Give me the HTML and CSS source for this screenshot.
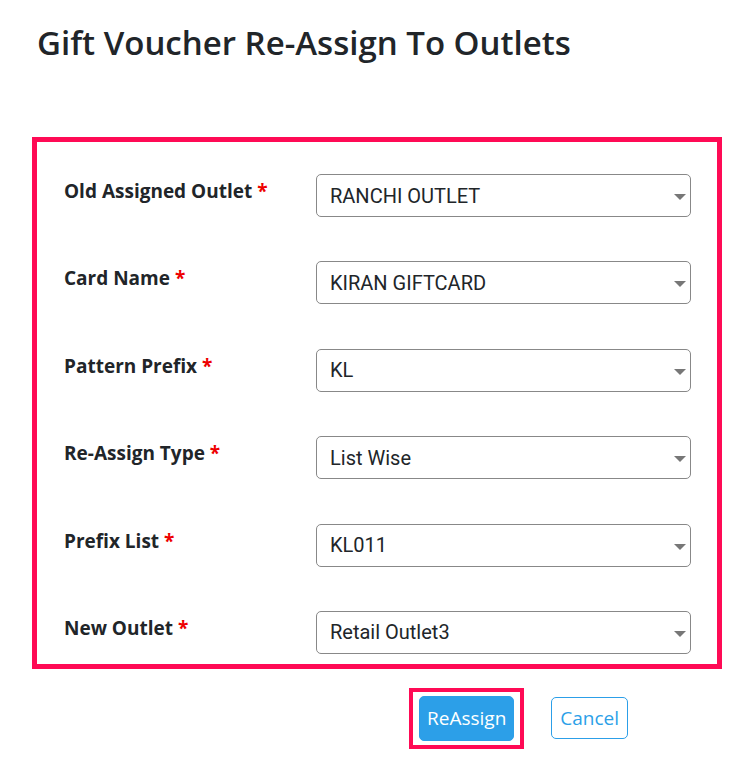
FILE: index.html
```html
<!DOCTYPE html>
<html>
<head>
  <title>Gift Voucher Re-Assign To Outlets</title>
  <link rel="stylesheet" href="styles.css">
</head>
<body>
  <div class="page">
    <h2 class="title">Gift Voucher Re-Assign To Outlets</h2>

    <div class="form-box">
      <div class="row">
        <label>Old Assigned Outlet <span class="req">*</span></label>
        <div class="select-wrap">
          <select><option>RANCHI OUTLET</option></select>
        </div>
      </div>
      <div class="row">
        <label>Card Name <span class="req">*</span></label>
        <div class="select-wrap">
          <select><option>KIRAN GIFTCARD</option></select>
        </div>
      </div>
      <div class="row">
        <label>Pattern Prefix <span class="req">*</span></label>
        <div class="select-wrap">
          <select><option>KL</option></select>
        </div>
      </div>
      <div class="row">
        <label>Re-Assign Type <span class="req">*</span></label>
        <div class="select-wrap">
          <select><option>List Wise</option></select>
        </div>
      </div>
      <div class="row">
        <label>Prefix List <span class="req">*</span></label>
        <div class="select-wrap">
          <select><option>KL011</option></select>
        </div>
      </div>
      <div class="row">
        <label>New Outlet <span class="req">*</span></label>
        <div class="select-wrap">
          <select><option>Retail Outlet3</option></select>
        </div>
      </div>
    </div>

    <div class="actions">
      <div class="highlight">
        <button class="btn btn-primary">ReAssign</button>
      </div>
      <button class="btn btn-outline">Cancel</button>
    </div>
  </div>
</body>
</html>
```

FILE: styles.css
```css
* {
  box-sizing: border-box;
}
body {
  margin: 0;
  background: #fff;
  font-family: "Open Sans", "Noto Sans", Arial, sans-serif;
  color: #212529;
}
.page {
  padding: 0 24px 0 32px;
}
.title {
  margin: 0;
  padding: 21px 0 0 5px;
  font-size: 33px;
  font-weight: 600;
  line-height: 44px;
  color: #212529;
}
.form-box {
  margin-top: 72px;
  width: 690px;
  border: 5px solid #ff0a55;
  padding: 32px 26px 10px 27px;
}
.row {
  display: grid;
  grid-template-columns: 252px 375px;
  align-items: start;
  margin-bottom: 44.4px;
}
.row:last-child {
  margin-bottom: 0;
}
.row label {
  font-size: 19px;
  font-weight: 700;
  line-height: 26px;
  padding-top: 4px;
}
.req {
  color: #e00;
}
.select-wrap {
  position: relative;
}
.select-wrap::after {
  content: "";
  position: absolute;
  right: 5px;
  top: 20px;
  border-left: 6px solid transparent;
  border-right: 6px solid transparent;
  border-top: 6px solid #777;
}
select {
  appearance: none;
  -webkit-appearance: none;
  width: 375px;
  height: 43px;
  border: 1px solid #888;
  border-radius: 5px;
  background: #fff;
  padding: 0 13px;
  font-family: Roboto, Arial, sans-serif;
  font-size: 20px;
  color: #212529;
}
.actions {
  display: flex;
  align-items: center;
  gap: 27px;
  margin-top: 19px;
  padding-left: 377px;
}
.highlight {
  border: 4px solid #ff0a55;
  padding: 4px 6px;
}
.btn {
  font-family: "Open Sans", "Noto Sans", Arial, sans-serif;
  font-size: 19px;
  border-radius: 5px;
  cursor: pointer;
}
.btn-primary {
  display: block;
  background: #2c9fe8;
  color: #fff;
  border: 1px solid #2c9fe8;
  height: 45px;
  padding: 0 7px;
}
.btn-outline {
  background: #fff;
  color: #2c9fe8;
  border: 1px solid #2c9fe8;
  height: 42px;
  padding: 0 8px;
}
```
